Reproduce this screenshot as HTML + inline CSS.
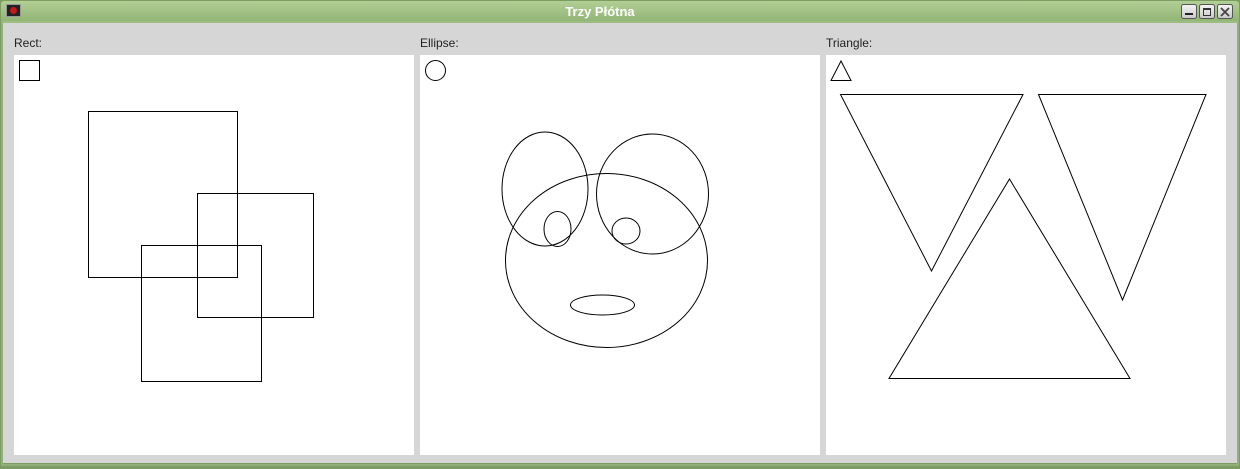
<!DOCTYPE html>
<html><head><style>
html,body{margin:0;padding:0;width:1240px;height:469px;overflow:hidden;background:#d6d6d6}
</style></head><body>
<svg width="1240" height="469" xmlns="http://www.w3.org/2000/svg" style="display:block">
<defs>
<linearGradient id="tb" x1="0" y1="0" x2="0" y2="1">
<stop offset="0" stop-color="#b2cf95"/><stop offset="1" stop-color="#8fb373"/>
</linearGradient>
<linearGradient id="bt" x1="0" y1="0" x2="0" y2="1">
<stop offset="0" stop-color="#f4f4f4"/><stop offset="1" stop-color="#c8c8c8"/>
</linearGradient>
</defs>
<rect x="0" y="0" width="1240" height="469" fill="#7c9c62"/>
<rect x="1" y="1" width="1238" height="22" fill="url(#tb)" rx="3"/>
<rect x="3" y="23" width="1234" height="440" fill="#d6d6d6"/>
<rect x="2" y="22" width="1236" height="443" fill="none" stroke="#a8c490" stroke-width="1"/>
<!-- app icon -->
<rect x="6" y="4" width="15" height="13" fill="#999" rx="1"/>
<rect x="7" y="5" width="13" height="11" fill="#222"/>
<circle cx="13.5" cy="10.5" r="3.5" fill="#c21a1a"/>
<text x="600" y="16" text-anchor="middle" font-family="Liberation Sans, sans-serif" font-size="13" font-weight="bold" fill="#ffffff">Trzy Płótna</text>
<!-- buttons -->
<g stroke="#555" fill="url(#bt)">
<rect x="1181.5" y="4.5" width="15" height="14" rx="2"/>
<rect x="1199.5" y="4.5" width="15" height="14" rx="2"/>
<rect x="1217.5" y="4.5" width="15" height="14" rx="2"/>
</g>
<rect x="1185" y="13" width="8" height="2" fill="#222"/>
<rect x="1203.5" y="8.5" width="7" height="7" fill="none" stroke="#333"/>
<rect x="1203" y="8" width="8" height="2" fill="#333"/>
<path d="M1221 8 L1229 16 M1229 8 L1221 16" stroke="#444" stroke-width="1.8"/>
<g font-family="Liberation Sans, sans-serif" font-size="12" fill="#222">
<text x="14" y="47">Rect:</text>
<text x="420" y="47">Ellipse:</text>
<text x="826" y="47">Triangle:</text>
</g>
<rect x="14" y="55" width="400" height="400" fill="#fff"/>
<rect x="420" y="55" width="400" height="400" fill="#fff"/>
<rect x="826" y="55" width="400" height="400" fill="#fff"/>
<g fill="none" stroke="#000" stroke-width="1">
<rect x="19.5" y="60.5" width="20" height="20"/>
<rect x="88.5" y="111.5" width="149" height="166"/>
<rect x="197.5" y="193.5" width="116" height="124"/>
<rect x="141.5" y="245.5" width="120" height="136"/>
<circle cx="435.5" cy="70.5" r="10"/>
<ellipse cx="545" cy="189" rx="43" ry="57"/>
<ellipse cx="652.5" cy="194" rx="56" ry="60"/>
<ellipse cx="606.5" cy="260.5" rx="101" ry="87"/>
<ellipse cx="557.5" cy="229" rx="13.5" ry="17.5"/>
<ellipse cx="626" cy="231" rx="14" ry="13"/>
<ellipse cx="602.5" cy="305" rx="32" ry="10"/>
<path d="M831 80.5 L841 61 L851 80.5 Z"/>
<path d="M840.5 94.5 L1023 94.5 L931.5 271 Z"/>
<path d="M1038.5 94.5 L1206 94.5 L1122.5 300 Z"/>
<path d="M1009.5 179 L1130 378.5 L889 378.5 Z"/>
</g>
</svg>
</body></html>
